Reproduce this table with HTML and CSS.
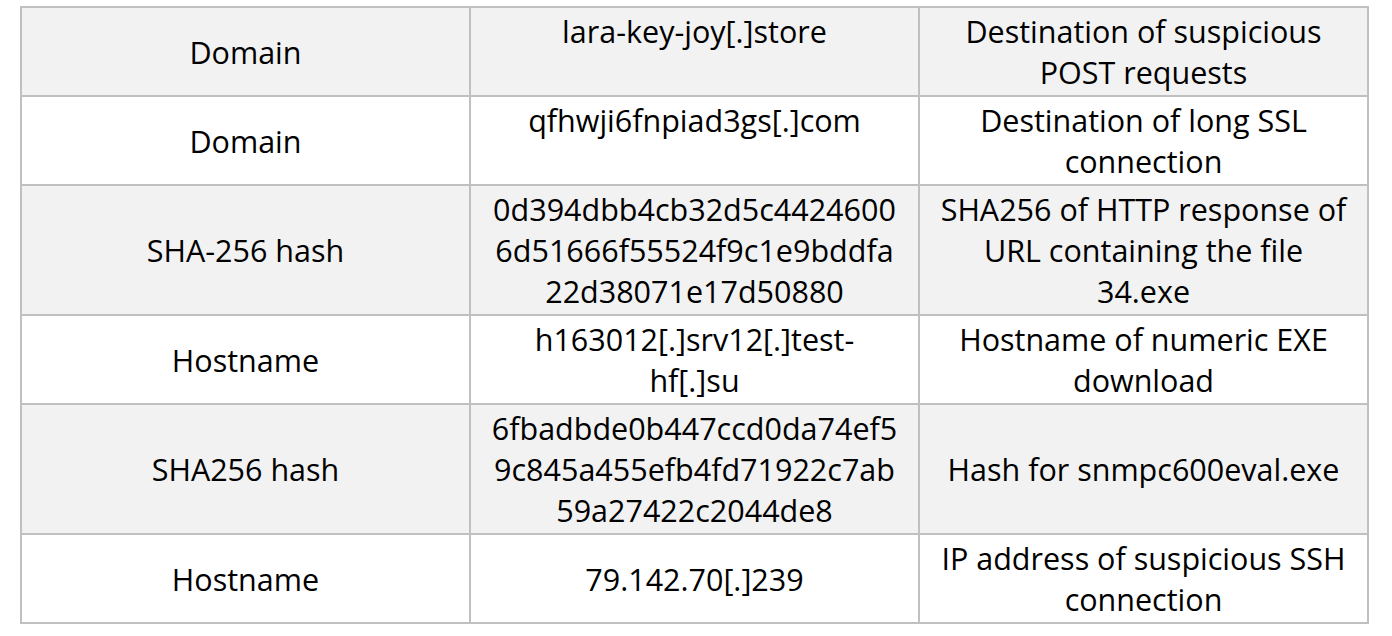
FILE: index.html
```html
<!DOCTYPE html>
<html>
<head>
<meta charset="utf-8">
<link rel="stylesheet" href="styles.css">
</head>
<body>
<div class="page">
<table class="ioc">
<colgroup><col class="c"><col class="c"><col class="c"></colgroup>
<tr class="shade"><td>Domain</td><td class="top">lara-key-joy[.]store</td><td>Destination of suspicious<br>POST requests</td></tr>
<tr><td>Domain</td><td class="top">qfhwji6fnpiad3gs[.]com</td><td>Destination of long SSL<br>connection</td></tr>
<tr class="shade"><td>SHA-256 hash</td><td>0d394dbb4cb32d5c4424600<br>6d51666f55524f9c1e9bddfa<br>22d38071e17d50880</td><td>SHA256 of HTTP response of<br>URL containing the file<br>34.exe</td></tr>
<tr><td>Hostname</td><td>h163012[.]srv12[.]test-<br>hf[.]su</td><td>Hostname of numeric EXE<br>download</td></tr>
<tr class="shade"><td>SHA256 hash</td><td>6fbadbde0b447ccd0da74ef5<br>9c845a455efb4fd71922c7ab<br>59a27422c2044de8</td><td>Hash for snmpc600eval.exe</td></tr>
<tr><td>Hostname</td><td>79.142.70[.]239</td><td>IP address of suspicious SSH<br>connection</td></tr>
</table>
</div>
</body>
</html>
```

FILE: styles.css
```css
html, body { margin: 0; padding: 0; background: #ffffff; }
.page { padding: 6px 0 0 20px; }
.ioc {
  border-collapse: collapse;
  width: 1349px;
  table-layout: fixed;
  font-family: "Open Sans", "Liberation Sans", sans-serif;
  font-size: 30.5px;
  line-height: 41px;
  color: #000;
}
.ioc td {
  border: 2px solid #c0c0c0;
  padding: 3px 4px 2px;
  text-align: center;
  vertical-align: middle;
  white-space: nowrap;
}
.ioc td.top { vertical-align: top; }
.ioc tr.shade td { background: #f2f2f2; }
.ioc tr:not(.shade) td { height: 82px; }
```
